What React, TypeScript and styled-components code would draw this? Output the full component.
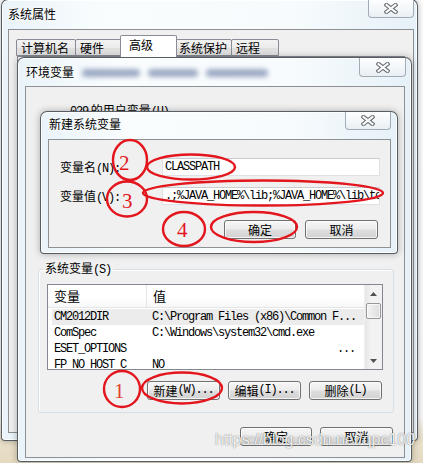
import React from 'react';
import styled, { createGlobalStyle } from 'styled-components';

const CJK = `"Noto Sans CJK SC", "Liberation Sans", sans-serif`;
const MONO = `"Liberation Mono", "DejaVu Sans Mono", monospace`;

const Global = createGlobalStyle`
  html, body { margin: 0; padding: 0; }
  body { width: 423px; height: 463px; overflow: hidden; background: #fff; font-family: ${CJK}; }
`;

const Desktop = styled.div`
  position: relative;
  width: 423px;
  height: 463px;
  overflow: hidden;
  background: linear-gradient(to bottom, #ffffff 0%, #fbfbfb 90%, #ebe2cc 95%, #e4d9c0 100%);
  font-family: ${CJK};
  font-size: 12px;
  color: #000;
`;

const Win = styled.div<{ $x: number; $y: number; $w: number; $h: number }>`
  position: absolute;
  left: ${p => p.$x}px;
  top: ${p => p.$y}px;
  width: ${p => p.$w}px;
  height: ${p => p.$h}px;
  box-sizing: border-box;
  display: flex;
  flex-direction: column;
  border: 1px solid rgba(70, 76, 82, 0.9);
  border-radius: 7px 7px 4px 4px;
  background: linear-gradient(to right, #e9f3f9 0%, #fafdfe 25%, #f7fbfd 70%, #e6f1f8 100%);
  box-shadow: 0 0 7px rgba(0, 0, 0, 0.3), inset 0 0 0 1px rgba(255, 255, 255, 0.85);
`;

const TitleBar = styled.div<{ $h: number; $pl: number; $pt: number }>`
  height: ${p => p.$h}px;
  flex: none;
  display: flex;
  justify-content: space-between;
  align-items: flex-start;
  padding-left: ${p => p.$pl}px;
  box-sizing: border-box;
  & > span:first-child { padding-top: ${p => p.$pt}px; }
`;

const TitleGroup = styled.span`
  display: flex;
  align-items: center;
  gap: 8px;
`;

const Title = styled.span`
  font-size: 12px;
  line-height: 16px;
  color: #000;
  text-shadow: 0 0 6px #fff, 0 0 3px #fff;
  white-space: nowrap;
`;

const Smudge = styled.span<{ $w: number }>`
  display: inline-block;
  width: ${p => p.$w}px;
  height: 8px;
  margin-top: 2px;
  border-radius: 4px;
  background: rgba(80, 100, 150, 0.55);
  filter: blur(2.5px);
`;

const CloseBtn = styled.div<{ $mr: number; $w: number; $h: number }>`
  width: ${p => p.$w}px;
  height: ${p => p.$h}px;
  margin-right: ${p => p.$mr}px;
  box-sizing: border-box;
  border: 1px solid #a3acb5;
  border-top: none;
  border-radius: 0 0 4px 4px;
  background: linear-gradient(to bottom, #fdfeff 0%, #f2f6f9 60%, #e8eef3 100%);
  display: flex;
  align-items: center;
  justify-content: center;
`;

const Client = styled.div<{ $m: string }>`
  flex: 1;
  margin: ${p => p.$m};
  box-sizing: border-box;
  border: 1px solid #8d9196;
  background: #f0f0f0;
  display: flex;
  flex-direction: column;
  min-height: 0;
`;

/* ---------- tabs (outer window) ---------- */
const TabStrip = styled.div`
  display: flex;
  align-items: flex-end;
  height: 26px;
  padding-left: 8px;
  flex: none;
`;

const Tab = styled.div<{ $w: number; $sel?: boolean }>`
  width: ${p => p.$w}px;
  height: ${p => (p.$sel ? 22 : 17)}px;
  margin: ${p => (p.$sel ? '0 -2px -1px -2px' : '0 0 0 -1px')};
  position: relative;
  z-index: ${p => (p.$sel ? 1 : 0)};
  box-sizing: border-box;
  border: 1px solid #898c95;
  border-bottom: ${p => (p.$sel ? 'none' : '1px solid #898c95')};
  border-radius: 2px 2px 0 0;
  background: ${p => (p.$sel ? '#ffffff' : 'linear-gradient(to bottom, #f3f3f3 0%, #ebebeb 50%, #dedede 51%, #e4e4e4 100%)')};
  padding-left: ${p => (p.$sel ? 8 : 4)}px;
  padding-top: ${p => (p.$sel ? 1 : 0)}px;
  font-size: 12px;
  line-height: 16px;
  white-space: nowrap;
`;

const TabPanel = styled.div`
  flex: 1;
  margin: 0 8px 7px 8px;
  border: 1px solid #898c95;
  background: #ffffff;
`;

/* ---------- environment window ---------- */
const UserSection = styled.div`
  height: 173px;
  flex: none;
`;

const UserLabel = styled.div`
  margin: 15px 0 0 44px;
  line-height: 16px;
  color: #000;
`;

const Mono = styled.span`
  font-family: ${MONO};
  font-size: 12px;
  letter-spacing: -1.2px;
`;

const Group = styled.fieldset`
  margin: 0 0 0 12px;
  width: 356px;
  box-sizing: border-box;
  min-inline-size: 0;
  padding: 0 10px 12px 8px;
  border: 1px solid #d5dfe5;
  border-radius: 3px;
  box-shadow: inset 1px 1px 0 #fff;
  flex: none;
`;

const Legend = styled.legend`
  padding: 0 2px;
  margin-left: -4px;
  font-size: 12px;
  line-height: 16px;
`;

const List = styled.div`
  margin-top: 6px;
  width: 336px;
  height: 86px;
  box-sizing: border-box;
  border: 1px solid #828790;
  background: #fff;
  display: flex;
  overflow: hidden;
`;

const ListBody = styled.div`
  flex: 1;
  min-width: 0;
  display: flex;
  flex-direction: column;
`;

const Header = styled.div`
  height: 23px;
  flex: none;
  box-sizing: border-box;
  display: grid;
  grid-template-columns: 99px 1fr;
  border-bottom: 1px solid #e5e5e5;
  background: linear-gradient(to bottom, #ffffff 0%, #ffffff 60%, #f6f7f8 100%);
`;

const HeadCell = styled.div<{ $first?: boolean }>`
  padding-left: 6px;
  border-right: ${p => (p.$first ? '1px solid #e5e5e5' : 'none')};
  font-size: 13px;
  line-height: 22px;
  color: #000;
`;

const Rows = styled.div`
  padding-top: 1px;
  display: flex;
  flex-direction: column;
`;

const Row = styled.div<{ $sel?: boolean }>`
  height: 16px;
  flex: none;
  margin-left: 4px;
  display: grid;
  grid-template-columns: 94px 1fr;
  align-items: center;
  background: ${p => (p.$sel ? '#ececec' : 'transparent')};
  font-family: ${MONO};
  font-size: 12px;
  letter-spacing: -1.2px;
  white-space: nowrap;
`;

const Cell = styled.div<{ $pl: number; $right?: boolean }>`
  padding-left: ${p => p.$pl}px;
  padding-right: ${p => (p.$right ? 9 : 0)}px;
  text-align: ${p => (p.$right ? 'right' : 'left')};
  overflow: hidden;
  line-height: 16px;
`;

const Scroll = styled.div`
  width: 17px;
  flex: none;
  display: flex;
  flex-direction: column;
  align-items: center;
  background: linear-gradient(to right, #e6e6e6 0%, #f3f3f3 40%, #f1f1f1 100%);
  border-left: 1px solid #f0f0f0;
`;

const Arrow = styled.div`
  height: 17px;
  width: 17px;
  display: flex;
  align-items: center;
  justify-content: center;
  flex: none;
`;

const Thumb = styled.div`
  width: 15px;
  height: 16px;
  margin-top: 1px;
  box-sizing: border-box;
  border: 1px solid #979797;
  border-radius: 2px;
  background: linear-gradient(to right, #f4f4f4 0%, #e9e9e9 50%, #dcdcdc 100%);
  box-shadow: inset 0 0 0 1px rgba(255, 255, 255, 0.7);
`;

const ScrollGap = styled.div`
  flex: 1;
`;

const BtnRow = styled.div<{ $mt: number; $mr: number; $gap: number }>`
  display: flex;
  justify-content: flex-end;
  gap: ${p => p.$gap}px;
  margin-top: ${p => p.$mt}px;
  margin-right: ${p => p.$mr}px;
  flex: none;
`;

const Btn = styled.div<{ $w: number }>`
  width: ${p => p.$w}px;
  height: 19px;
  box-sizing: border-box;
  border: 1px solid #707070;
  border-radius: 3px;
  background: linear-gradient(to bottom, #f6f6f6 0%, #ececec 48%, #dedede 52%, #d2d2d2 100%);
  box-shadow: inset 0 0 0 1px rgba(255, 255, 255, 0.75);
  display: flex;
  align-items: center;
  justify-content: center;
  font-size: 12px;
  line-height: 17px;
  white-space: nowrap;
`;

/* ---------- dialog ---------- */
const Form = styled.div`
  display: grid;
  grid-template-columns: 102px 218px;
  row-gap: 9px;
  padding: 18px 0 0 11px;
  flex: none;
`;

const FieldLabel = styled.div`
  line-height: 18px;
  white-space: nowrap;
`;

const Input = styled.div`
  height: 18px;
  box-sizing: border-box;
  border: 1px solid #dde2e7;
  border-top-color: #c9cdd2;
  background: #fff;
  padding-left: 2px;
  overflow: hidden;
  white-space: nowrap;
  font-family: ${MONO};
  font-size: 12px;
  letter-spacing: -1.2px;
  line-height: 16px;
`;

/* ---------- overlays ---------- */
const Marks = styled.svg`
  position: absolute;
  left: 0;
  top: 0;
  pointer-events: none;
`;

const Watermark = styled.div`
  position: absolute;
  left: 215px;
  top: 431px;
  font-family: "Liberation Sans", Arial, sans-serif;
  font-size: 16px;
  color: rgba(255, 255, 255, 0.9);
  text-shadow: 0 0 1px rgba(0, 0, 0, 0.45), 0 0 2px rgba(0, 0, 0, 0.2);
  white-space: nowrap;
  pointer-events: none;
`;

const XGlyph = () => (
  <svg width="14" height="11" viewBox="0 0 14 11">
    <path d="M2.5 2 L11.5 9 M11.5 2 L2.5 9" stroke="#6e7378" strokeWidth="4.2" strokeLinecap="square" fill="none" />
    <path d="M2.5 2 L11.5 9 M11.5 2 L2.5 9" stroke="#fbfbfb" strokeWidth="2" strokeLinecap="square" fill="none" />
  </svg>
);

const UpArrow = () => (
  <svg width="7" height="4" viewBox="0 0 7 4"><path d="M0 4 L3.5 0 L7 4 Z" fill="#505050" /></svg>
);
const DownArrow = () => (
  <svg width="7" height="4" viewBox="0 0 7 4"><path d="M0 0 L3.5 4 L7 0 Z" fill="#505050" /></svg>
);

const rows = [
  { name: 'CM2012DIR', value: 'C:\\Program Files (x86)\\Common F...', sel: true },
  { name: 'ComSpec', value: 'C:\\Windows\\system32\\cmd.exe' },
  { name: 'ESET_OPTIONS', value: '...', right: true },
  { name: 'FP_NO_HOST_C', value: 'NO' },
];

const RED = '#e3161e';

export default function App() {
  return (
    <Desktop>
      <Global />

      {/* 系统属性 */}
      <Win $x={1} $y={-1} $w={417} $h={442}>
        <TitleBar $h={29} $pl={6} $pt={6}>
          <Title>系统属性</Title>
          <CloseBtn $mr={3} $w={46} $h={18}><XGlyph /></CloseBtn>
        </TitleBar>
        <Client $m="0 3px 7px 6px">
          <TabStrip>
            <Tab $w={60}>计算机名</Tab>
            <Tab $w={47}>硬件</Tab>
            <Tab $w={57} $sel>高级</Tab>
            <Tab $w={58}>系统保护</Tab>
            <Tab $w={48}>远程</Tab>
          </TabStrip>
          <TabPanel />
        </Client>
      </Win>

      {/* 环境变量 */}
      <Win $x={17} $y={57} $w={395} $h={405}>
        <TitleBar $h={28} $pl={8} $pt={6}>
          <TitleGroup>
            <Title>环境变量</Title>
            <Smudge $w={58} />
            <Smudge $w={50} />
            <Smudge $w={62} />
          </TitleGroup>
          <CloseBtn $mr={5} $w={47} $h={19}><XGlyph /></CloseBtn>
        </TitleBar>
        <Client $m="0 6px 3px 7px">
          <UserSection>
            <UserLabel><Mono>029</Mono> 的用户变量<Mono>(U)</Mono></UserLabel>
          </UserSection>
          <Group>
            <Legend>系统变量<Mono>(S)</Mono></Legend>
            <List>
              <ListBody>
                <Header>
                  <HeadCell $first>变量</HeadCell>
                  <HeadCell>值</HeadCell>
                </Header>
                <Rows>
                  {rows.map(r => (
                    <Row key={r.name} $sel={r.sel}>
                      <Cell $pl={2}>{r.name}</Cell>
                      <Cell $pl={6} $right={r.right}>{r.value}</Cell>
                    </Row>
                  ))}
                </Rows>
              </ListBody>
              <Scroll>
                <Arrow><UpArrow /></Arrow>
                <Thumb />
                <ScrollGap />
                <Arrow><DownArrow /></Arrow>
              </Scroll>
            </List>
            <BtnRow $mt={11} $mr={1} $gap={8}>
              <Btn $w={73}>新建<Mono>(W)...</Mono></Btn>
              <Btn $w={73}>编辑<Mono>(I)...</Mono></Btn>
              <Btn $w={73}>删除<Mono>(L)</Mono></Btn>
            </BtnRow>
          </Group>
          <BtnRow $mt={14} $mr={11} $gap={8}>
            <Btn $w={72}>确定</Btn>
            <Btn $w={73}>取消</Btn>
          </BtnRow>
        </Client>
      </Win>

      {/* 新建系统变量 */}
      <Win $x={40} $y={111} $w={358} $h={143}>
        <TitleBar $h={27} $pl={8} $pt={4}>
          <Title>新建系统变量</Title>
          <CloseBtn $mr={6} $w={46} $h={18}><XGlyph /></CloseBtn>
        </TitleBar>
        <Client $m="0 6px 5px 7px">
          <Form>
            <FieldLabel>变量名<Mono>(N):</Mono></FieldLabel>
            <Input>CLASSPATH</Input>
            <FieldLabel>变量值<Mono>(V):</Mono></FieldLabel>
            <Input>.;%JAVA_HOME%\lib;%JAVA_HOME%\lib\tools.jar</Input>
          </Form>
          <BtnRow $mt={13} $mr={12} $gap={9}>
            <Btn $w={72}>确定</Btn>
            <Btn $w={73}>取消</Btn>
          </BtnRow>
        </Client>
      </Win>

      {/* red annotations */}
      <Marks width="423" height="463" viewBox="0 0 423 463">
        <g fill="none" stroke={RED} strokeWidth="2.4">
          <ellipse cx="130" cy="160" rx="17" ry="20" />
          <ellipse cx="191" cy="167" rx="44" ry="12.5" />
          <ellipse cx="127" cy="199" rx="20" ry="17.5" />
          <ellipse cx="263" cy="193" rx="120" ry="12.5" />
          <ellipse cx="184" cy="229" rx="21" ry="17" />
          <ellipse cx="254" cy="227" rx="43" ry="15" />
          <ellipse cx="122" cy="389" rx="18" ry="18" />
          <ellipse cx="182" cy="388" rx="40" ry="15.5" />
        </g>
        <g fontFamily="'Liberation Serif', 'DejaVu Serif', serif" fontSize="21" fill={RED}>
          <text x="119" y="170">2</text>
          <text x="122" y="208">3</text>
          <text x="177" y="237">4</text>
          <text x="114" y="398" fill="#e2402a">1</text>
        </g>
      </Marks>

      <Watermark>https://blog.csdn.net/qpc100</Watermark>
    </Desktop>
  );
}
